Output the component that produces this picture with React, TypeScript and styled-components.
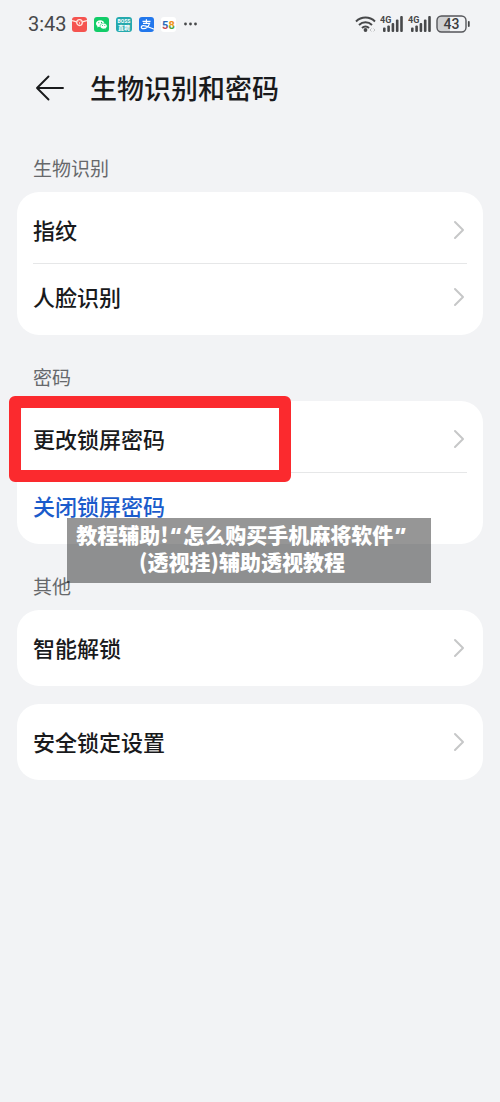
import React from "react";
import styled, { createGlobalStyle } from "styled-components";

const GlobalStyle = createGlobalStyle`
  * { box-sizing: border-box; }
  body {
    margin: 0;
    background: #f2f3f5;
    color: #191a1c;
    font-family: "Noto Sans CJK SC", sans-serif;
  }
  button { font: inherit; }
`;

const Page = styled.div`
  min-height: 100vh;
  background: #f2f3f5;
`;

const StatusBar = styled.div`
  display: flex;
  align-items: center;
  justify-content: space-between;
  height: 48px;
  padding: 0 30px 0 28px;
  color: #47484a;
`;

const StatusGroup = styled.div<{ $gap: number }>`
  display: flex;
  align-items: center;
  gap: ${(p) => p.$gap}px;

  svg { display: block; flex: none; }
`;

const Clock = styled.time`
  font: 400 20px/24px Roboto, sans-serif;
`;

const Header = styled.header`
  display: flex;
  align-items: center;
  gap: 24px;
  height: 78px;
  padding: 2px 34px 0;
`;

const BackButton = styled.button`
  display: flex;
  padding: 0;
  border: 0;
  background: none;
  color: inherit;
  cursor: pointer;
`;

const Title = styled.h1`
  margin: 0;
  font-size: 27px;
  line-height: 40px;
  font-weight: 500;
`;

const Section = styled.section`
  position: relative;
  padding: 0 17px;
`;

const SectionLabel = styled.h2`
  margin: 0;
  padding: 30px 16px 12px;
  color: #66686b;
  font-size: 19px;
  line-height: 24px;
  font-weight: 400;
`;

const Card = styled.div`
  padding: 5px 16px;
  border-radius: 22px;
  background: #fff;

  & + & { margin-top: 18px; }
`;

const Row = styled.button<{ $link?: boolean }>`
  position: relative;
  display: flex;
  align-items: center;
  justify-content: space-between;
  width: 100%;
  height: 66px;
  padding: 0 2px 0 0;
  border: 0;
  background: none;
  color: ${(p) => (p.$link ? "#1a5bcb" : "#191a1c")};
  font-size: 22px;
  line-height: 32px;
  font-weight: 500;
  text-align: left;
  cursor: pointer;
`;

const RowText = styled.span`
  padding-bottom: 3px;
`;

const Divider = styled.hr`
  height: 1px;
  margin: 0;
  border: 0;
  background: #e6e7e8;
`;

const Highlight = styled.span`
  position: absolute;
  top: -10px;
  bottom: -10px;
  left: -24px;
  width: 282px;
  border: 12px solid #fb2a2e;
  border-radius: 6px;
  pointer-events: none;
`;

const Caption = styled.p`
  position: absolute;
  z-index: 1;
  left: 67px;
  right: 69px;
  bottom: -39px;
  margin: 0;
  padding: 3px 14px 8px 0;
  background: rgba(0, 0, 0, 0.41);
  color: #fff;
  font-size: 21px;
  line-height: 27px;
  font-weight: 900;
  text-align: center;
  white-space: nowrap;
`;

const Quote = styled.span`
  padding: 0 2px;
  font-family: "Open Sans", sans-serif;
  font-weight: 800;
  line-height: 1;
`;

const Chevron = () => (
  <svg width="12" height="20" viewBox="0 0 12 20" fill="none" aria-hidden="true">
    <path d="M2 2l8 8-8 8" stroke="#c6c7c8" strokeWidth="2" strokeLinecap="round" strokeLinejoin="round" />
  </svg>
);

const MailIcon = () => (
  <svg width="15" height="15" viewBox="0 0 15 15">
    <rect width="15" height="15" rx="3" fill="#f5534f" />
    <path d="M0 3.6Q3.500 4.500 5 5.2M15 3.6Q11.500 4.500 10 5.2" stroke="#ffe9e2" strokeWidth="1.200" fill="none" />
    <ellipse cx="7.500" cy="5.600" rx="2.800" ry="2.900" fill="#f5534f" stroke="#ffe9e2" strokeWidth="1.300" />
    <path d="M6.500 4.600l1 1 1-1M7.500 5.600v1.600" stroke="#ffe9e2" strokeWidth=".7" fill="none" />
  </svg>
);

const WeChatIcon = () => (
  <svg width="15" height="15" viewBox="0 0 15 15">
    <rect width="15" height="15" rx="3" fill="#12cc68" />
    <path d="M6.200 3.200c-2.400 0-4.200 1.500-4.200 3.400 0 1.100.6 2 1.500 2.600L3.200 10.500l1.500-.7c.5.1 1 .2 1.500.2 2.400 0 4.200-1.500 4.200-3.400S8.600 3.200 6.200 3.200z" fill="#fff" />
    <path d="M9.600 6.200c-2 0-3.600 1.300-3.600 2.900S7.600 12 9.600 12c.4 0 .8-.1 1.200-.2l1.200.6-.3-1.100c.9-.5 1.500-1.300 1.500-2.200 0-1.600-1.600-2.900-3.600-2.900z" fill="#fff" stroke="#12cc68" strokeWidth=".6" />
    <g fill="#12cc68">
      <circle cx="4.800" cy="5.700" r=".6" />
      <circle cx="7.500" cy="5.400" r=".6" />
      <circle cx="8.500" cy="8.400" r=".5" />
      <circle cx="10.800" cy="8.400" r=".5" />
    </g>
  </svg>
);

const BossIcon = () => (
  <svg width="16" height="15" viewBox="0 0 16 15" fill="#fff" textAnchor="middle">
    <rect width="16" height="15" rx="3" fill="#25a9ad" />
    <text x="8" y="6" fontFamily="Roboto, sans-serif" fontSize="5" fontWeight="700">BOSS</text>
    <text x="8" y="13" fontFamily="Noto Sans CJK SC, sans-serif" fontSize="6" fontWeight="700">直聘</text>
  </svg>
);

const AlipayIcon = () => (
  <svg width="15" height="15" viewBox="0 0 15 15">
    <rect width="15" height="15" rx="3" fill="#2277ec" />
    <path
      d="M3.500 4.300h8M7.400 2.300v4M4 6.400h6.600C9.800 8.800 7.300 11.700 4.500 11.700c-1.500 0-2.300-.8-2.200-1.700.1-1 1.300-1.600 2.700-1.400 2.600.3 5.400 2 10 3.500"
      stroke="#fff"
      strokeWidth="1.200"
      fill="none"
    />
  </svg>
);

const FiftyEightIcon = () => (
  <svg width="15" height="15" viewBox="0 0 15 15" fontFamily="Roboto, sans-serif" fontSize="11" fontWeight="700">
    <defs>
      <linearGradient id="eight" x1="0" y1="0" x2="0" y2="1">
        <stop offset=".3" stopColor="#f08a1d" />
        <stop offset=".5" stopColor="#e8a31d" />
        <stop offset=".6" stopColor="#4da43a" />
      </linearGradient>
      <linearGradient id="five" x1="0" y1="0" x2="0" y2="1">
        <stop offset=".5" stopColor="#2d67b5" />
        <stop offset=".7" stopColor="#d84548" />
      </linearGradient>
    </defs>
    <rect width="15" height="15" rx="3" fill="#fff" />
    <text x="1" y="12" fill="url(#five)">5</text>
    <text x="7.500" y="12" fill="url(#eight)">8</text>
  </svg>
);

const MoreIcon = () => (
  <svg width="15" height="4" viewBox="0 0 15 4" fill="#47484a">
    <circle cx="2.500" cy="2" r="1.400" />
    <circle cx="7.500" cy="2" r="1.400" />
    <circle cx="12.500" cy="2" r="1.400" />
  </svg>
);

const WifiIcon = () => (
  <svg width="21" height="18" viewBox="0 0 21 18" fill="none" stroke="#47484a" strokeWidth="2">
    <path d="M1 6.500c5.400-5.200 13.600-5.200 19 0M4 9.900c3.700-3.500 9.300-3.500 13 0M7 13c2-1.900 5-1.900 7 0" />
    <circle cx="10.500" cy="15" r="1.900" fill="#47484a" stroke="none" />
    <path d="M16.500 13.500l-1.500 1.500 1.500 1.500M18.500 13.500l1.500 1.500-1.500 1.500" stroke="#c2c3c5" strokeWidth="1" />
  </svg>
);

const SignalIcon = () => (
  <svg width="24" height="18" viewBox="0 0 24 18" fill="#47484a">
    <text x="0" y="8" fontFamily="Roboto, sans-serif" fontSize="9" fontWeight="700">4G</text>
    <rect x="3" y="12.500" width="2.600" height="4.500" rx="1" />
    <rect x="7.300" y="10.500" width="2.600" height="6.500" rx="1" />
    <rect x="11.600" y="8" width="2.600" height="9" rx="1" />
    <rect x="15.900" y="4.500" width="2.600" height="12.500" rx="1" />
    <rect x="20.200" y="1" width="2.600" height="16" rx="1" />
  </svg>
);

const BatteryIcon = () => (
  <svg width="34" height="18" viewBox="0 0 34 18">
    <path d="M5 1h9v16H5a4 4 0 0 1-4-4V5a4 4 0 0 1 4-4z" fill="#cfd0d2" />
    <rect x="1" y="1" width="29" height="16" rx="4.500" fill="none" stroke="#55565a" strokeWidth="1.400" />
    <path d="M32.800 7v4" stroke="#47484a" strokeWidth="1.800" strokeLinecap="round" />
    <text x="15.500" y="14" textAnchor="middle" fill="#3c3d40" fontFamily="Roboto, sans-serif" fontSize="14" fontWeight="500">43</text>
  </svg>
);

const BackIcon = () => (
  <svg width="32" height="28" viewBox="0 0 32 28" fill="none" aria-hidden="true">
    <path d="M29 14H3M14.500 2.500L3 14l11.500 11.500" stroke="#191a1c" strokeWidth="1.900" strokeLinecap="round" strokeLinejoin="round" />
  </svg>
);

type ItemProps = { label: string; highlighted?: boolean };

const NavItem = ({ label, highlighted }: ItemProps) => (
  <Row type="button">
    <RowText>{label}</RowText>
    <Chevron />
    {highlighted && <Highlight />}
  </Row>
);

export default function App() {
  return (
    <Page>
      <GlobalStyle />
      <StatusBar>
        <StatusGroup $gap={5}>
          <Clock>3:43</Clock>
          <StatusGroup $gap={7}>
            <MailIcon />
            <WeChatIcon />
            <BossIcon />
            <AlipayIcon />
            <FiftyEightIcon />
            <MoreIcon />
          </StatusGroup>
        </StatusGroup>
        <StatusGroup $gap={4}>
          <WifiIcon />
          <SignalIcon />
          <SignalIcon />
          <BatteryIcon />
        </StatusGroup>
      </StatusBar>
      <Header>
        <BackButton type="button" aria-label="返回">
          <BackIcon />
        </BackButton>
        <Title>生物识别和密码</Title>
      </Header>
      <main>
        <Section>
          <SectionLabel>生物识别</SectionLabel>
          <Card>
            <NavItem label="指纹" />
            <Divider />
            <NavItem label="人脸识别" />
          </Card>
        </Section>
        <Section>
          <SectionLabel>密码</SectionLabel>
          <Card>
            <NavItem label="更改锁屏密码" highlighted />
            <Divider />
            <Row type="button" $link>
              <RowText>关闭锁屏密码</RowText>
            </Row>
          </Card>
          <Caption>
            教程辅助!<Quote>“</Quote>怎么购买手机麻将软件<Quote>”</Quote>
            <br />
            (透视挂)辅助透视教程
          </Caption>
        </Section>
        <Section>
          <SectionLabel>其他</SectionLabel>
          <Card>
            <NavItem label="智能解锁" />
          </Card>
          <Card>
            <NavItem label="安全锁定设置" />
          </Card>
        </Section>
      </main>
    </Page>
  );
}
